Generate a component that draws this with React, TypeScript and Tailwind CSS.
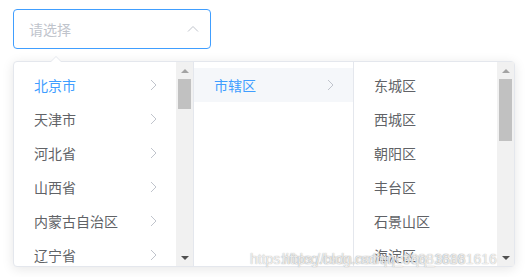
const provinces = ["北京市", "天津市", "河北省", "山西省", "内蒙古自治区", "辽宁省"];
const cities = ["市辖区"];
const districts = ["东城区", "西城区", "朝阳区", "丰台区", "石景山区", "海淀区"];

function Chevron() {
  return (
    <svg width="7" height="11" viewBox="0 0 7 11" className="absolute right-[19px] top-1/2 -translate-y-1/2">
      <path d="M1 0.5 L6 5.5 L1 10.5" fill="none" stroke="#c0c4cc" strokeWidth="1" />
    </svg>
  );
}

function Scrollbar({ thumb }: { thumb: number }) {
  return (
    <div className="flex w-[17px] shrink-0 flex-col bg-[#f1f1f1]">
      <div className="flex h-[17px] items-center justify-center">
        <svg width="8" height="4" viewBox="0 0 8 4">
          <path d="M0 4 L4 0 L8 4 Z" fill="#a3a3a3" />
        </svg>
      </div>
      <div className="flex-1 px-[2px]">
        <div className="bg-[#c1c1c1]" style={{ height: thumb }} />
      </div>
      <div className="flex h-[17px] items-center justify-center">
        <svg width="8" height="4" viewBox="0 0 8 4">
          <path d="M0 0 L4 4 L8 0 Z" fill="#505050" />
        </svg>
      </div>
    </div>
  );
}

function Item({ label, active, hover, arrow }: { label: string; active?: boolean; hover?: boolean; arrow?: boolean }) {
  return (
    <li
      className={`relative flex h-[34px] items-center pl-[20px] pr-[30px] text-[14px] ${
        active ? "text-[#409eff]" : "text-[#606266]"
      } ${hover ? "bg-[#f5f7fa]" : ""}`}
    >
      <span>{label}</span>
      {arrow && <Chevron />}
    </li>
  );
}

export default function App() {
  return (
    <div
      className="relative h-[277px] w-[530px] overflow-hidden bg-white pt-[9px]"
      style={{ fontFamily: '"Noto Sans CJK SC", "Noto Sans", sans-serif' }}
    >
      <div className="ml-[13px] flex h-[40px] w-[198px] items-center justify-between rounded-[4px] border border-[#409eff] pl-[15px] pr-[10px]">
        <span className="text-[14px] text-[#c0c4cc]">请选择</span>
        <svg width="12" height="8" viewBox="0 0 12 8" className="mr-[1px]">
          <path d="M1 6.5 L6 1.5 L11 6.5" fill="none" stroke="#c0c4cc" strokeWidth="1" />
        </svg>
      </div>

      <div className="relative ml-[13px] mt-[12px] flex h-[206px] w-[502px] rounded-[4px] border border-[#e4e7ed] bg-white shadow-[0_2px_12px_0_rgba(0,0,0,0.1)]">
        <div className="absolute left-[36px] top-[-6px] h-0 w-0 border-x-[6px] border-b-[6px] border-x-transparent border-b-[#e4e7ed]" />
        <div className="absolute left-[36px] top-[-5px] h-0 w-0 border-x-[6px] border-b-[6px] border-x-transparent border-b-white" />

        <div className="flex w-[180px] shrink-0 border-r border-[#e4e7ed]">
          <ul className="flex-1 overflow-hidden py-[6px]">
            {provinces.map((p, i) => (
              <Item key={p} label={p} active={i === 0} arrow />
            ))}
          </ul>
          <Scrollbar thumb={30} />
        </div>

        <div className="w-[160px] shrink-0 border-r border-[#e4e7ed]">
          <ul className="py-[6px]">
            {cities.map((c) => (
              <Item key={c} label={c} active hover arrow />
            ))}
          </ul>
        </div>

        <div className="flex flex-1">
          <ul className="flex-1 overflow-hidden py-[6px]">
            {districts.map((d) => (
              <Item key={d} label={d} />
            ))}
          </ul>
          <Scrollbar thumb={62} />
        </div>
      </div>

      <span
        className="pointer-events-none absolute left-[250px] top-[249px] whitespace-nowrap text-[14px] text-white/80 [text-shadow:0_0_1px_rgba(120,120,120,0.8)]"
        style={{ fontFamily: '"Liberation Sans", sans-serif' }}
      >
        https://blog.csdn.net/qq_38881616
      </span>
      <span
        className="pointer-events-none absolute left-[282px] top-[249px] whitespace-nowrap text-[14px] text-white/80 [text-shadow:0_0_1px_rgba(120,120,120,0.8)]"
        style={{ fontFamily: '"Liberation Sans", sans-serif' }}
      >
        https://blog.csdn.net/qq_38881616
      </span>
    </div>
  );
}
